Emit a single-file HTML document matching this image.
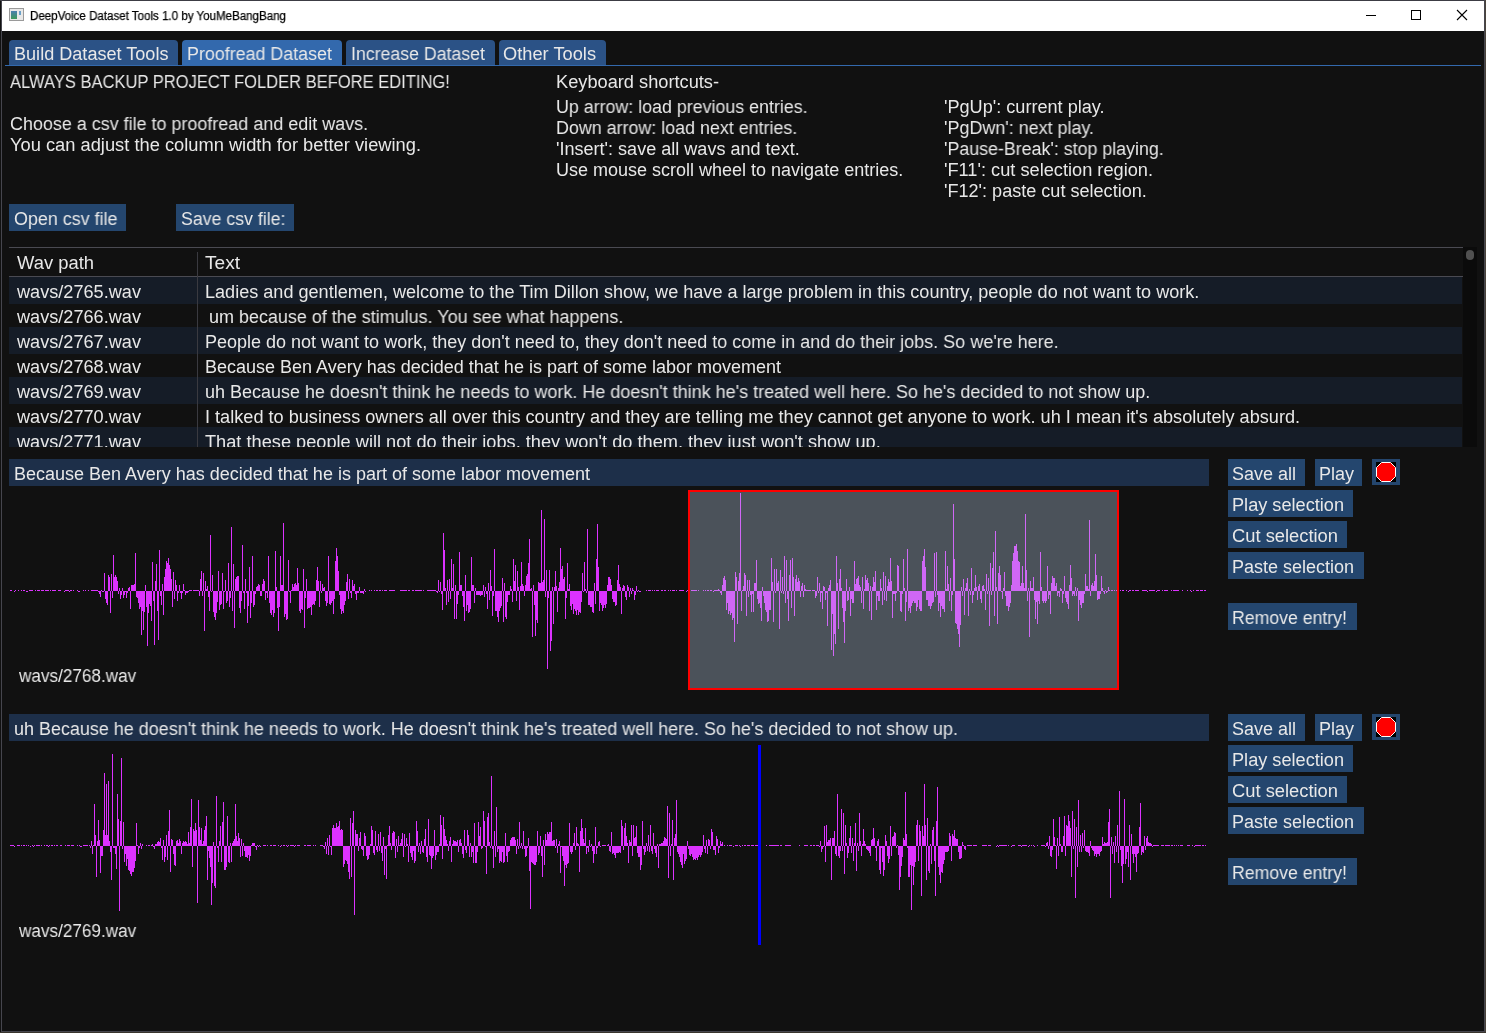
<!DOCTYPE html>
<html><head><meta charset="utf-8"><title>DeepVoice Dataset Tools</title>
<style>
html,body{margin:0;padding:0;width:1486px;height:1033px;overflow:hidden;background:#111111}
body>div,body div{position:absolute}
.t{position:absolute;white-space:pre;font-family:"Liberation Sans",sans-serif;transform-origin:0 0;display:inline-block;will-change:transform}
svg{position:absolute}
</style></head><body>
<div style="left:0px;top:0px;width:1486px;height:1px;background:#3c3c44;"></div>
<div style="left:1px;top:1px;width:1483px;height:30px;background:#ffffff;"></div>
<div style="left:1px;top:0px;width:1px;height:1031px;background:#46464e;"></div>
<div style="left:1484px;top:0px;width:1px;height:1031px;background:#46464e;"></div>
<div style="left:1485px;top:0px;width:1px;height:1033px;background:#4a443c;"></div>
<div style="left:1px;top:1031px;width:1484px;height:1px;background:#46464e;"></div>
<div style="left:0px;top:1032px;width:1486px;height:1px;background:#3a352e;"></div>
<div style="left:9px;top:8px;width:13px;height:11px;border:1px solid #9a9a9a;background:#e8e8e8"></div>
<div style="left:11px;top:11px;width:6px;height:8px;background:linear-gradient(#4a7fb0,#3c9a5a)"></div>
<div style="left:19px;top:11px;width:2px;height:4px;background:#6aa0c8"></div>
<span id="t0" class="t" style="left:30px;top:10px;font-size:12px;line-height:12px;color:#000000;transform:scaleX(0.9623);-webkit-text-stroke:0.25px #000">DeepVoice Dataset Tools 1.0 by YouMeBangBang</span>
<div style="left:1366px;top:15px;width:10px;height:1px;background:#000;"></div>
<div style="left:1411px;top:10px;width:8px;height:8px;border:1px solid #000"></div>
<svg style="position:absolute;left:1456px;top:9px" width="12" height="12" viewBox="0 0 12 12"><path d="M1 1L11 11M11 1L1 11" stroke="#000" stroke-width="1.1"/></svg>
<div style="left:9px;top:40px;width:169px;height:25px;background:#2b5286;border-radius:4px 4px 0 0"></div>
<span id="t1" class="t" style="left:14px;top:45px;font-size:18px;line-height:18px;color:#e8e8e8;transform:scaleX(1.0048);">Build Dataset Tools</span>
<div style="left:182px;top:40px;width:160px;height:25px;background:#3369ad;border-radius:4px 4px 0 0"></div>
<span id="t2" class="t" style="left:187px;top:45px;font-size:18px;line-height:18px;color:#e8e8e8;transform:scaleX(0.9925);">Proofread Dataset</span>
<div style="left:346px;top:40px;width:149px;height:25px;background:#2b5286;border-radius:4px 4px 0 0"></div>
<span id="t3" class="t" style="left:351px;top:45px;font-size:18px;line-height:18px;color:#e8e8e8;transform:scaleX(0.9846);">Increase Dataset</span>
<div style="left:499px;top:40px;width:107px;height:25px;background:#2b5286;border-radius:4px 4px 0 0"></div>
<span id="t4" class="t" style="left:503px;top:45px;font-size:18px;line-height:18px;color:#e8e8e8;transform:scaleX(1.0141);">Other Tools</span>
<div style="left:5px;top:65px;width:1476px;height:1px;background:#3369ad;"></div>
<span id="t5" class="t" style="left:10px;top:73px;font-size:18px;line-height:18px;color:#e8e8e8;transform:scaleX(0.9182);">ALWAYS BACKUP PROJECT FOLDER BEFORE EDITING!</span>
<span id="t6" class="t" style="left:10px;top:115px;font-size:18px;line-height:18px;color:#e8e8e8;transform:scaleX(0.9966);">Choose a csv file to proofread and edit wavs.</span>
<span id="t7" class="t" style="left:10px;top:136px;font-size:18px;line-height:18px;color:#e8e8e8;transform:scaleX(1.0159);">You can adjust the column width for better viewing.</span>
<span id="t8" class="t" style="left:556px;top:73px;font-size:18px;line-height:18px;color:#e8e8e8;transform:scaleX(1.0120);">Keyboard shortcuts-</span>
<span id="t9" class="t" style="left:556px;top:98px;font-size:18px;line-height:18px;color:#e8e8e8;transform:scaleX(0.9904);">Up arrow: load previous entries.</span>
<span id="t10" class="t" style="left:556px;top:119px;font-size:18px;line-height:18px;color:#e8e8e8;transform:scaleX(0.9929);">Down arrow: load next entries.</span>
<span id="t11" class="t" style="left:556px;top:140px;font-size:18px;line-height:18px;color:#e8e8e8;transform:scaleX(1.0030);">'Insert': save all wavs and text.</span>
<span id="t12" class="t" style="left:556px;top:161px;font-size:18px;line-height:18px;color:#e8e8e8;transform:scaleX(0.9995);">Use mouse scroll wheel to navigate entries.</span>
<span id="t13" class="t" style="left:944px;top:98px;font-size:18px;line-height:18px;color:#e8e8e8;transform:scaleX(1.0062);">'PgUp': current play.</span>
<span id="t14" class="t" style="left:944px;top:119px;font-size:18px;line-height:18px;color:#e8e8e8;transform:scaleX(0.9959);">'PgDwn': next play.</span>
<span id="t15" class="t" style="left:944px;top:140px;font-size:18px;line-height:18px;color:#e8e8e8;transform:scaleX(0.9896);">'Pause-Break': stop playing.</span>
<span id="t16" class="t" style="left:944px;top:161px;font-size:18px;line-height:18px;color:#e8e8e8;transform:scaleX(1.0114);">'F11': cut selection region.</span>
<span id="t17" class="t" style="left:944px;top:182px;font-size:18px;line-height:18px;color:#e8e8e8;transform:scaleX(1.0041);">'F12': paste cut selection.</span>
<div style="left:9px;top:204px;width:117px;height:27px;background:#24466e;"></div>
<span id="t18" class="t" style="left:13.5px;top:210px;font-size:18px;line-height:18px;color:#e8e8e8;transform:scaleX(0.9947);">Open csv file</span>
<div style="left:176px;top:204px;width:118px;height:27px;background:#24466e;"></div>
<span id="t19" class="t" style="left:180.5px;top:210px;font-size:18px;line-height:18px;color:#e8e8e8;transform:scaleX(0.9853);">Save csv file:</span>
<div style="left:9px;top:247px;width:1454px;height:1px;background:#4a4a52;"></div>
<div style="left:1463px;top:247px;width:14px;height:200px;background:#0b0b0b;"></div>
<div style="left:1466px;top:250px;width:8px;height:10px;background:#515151;border-radius:4px"></div>
<div style="left:9px;top:276px;width:1454px;height:1px;background:#4a4a52;"></div>
<div style="left:197px;top:252px;width:1px;height:195px;background:#3a3a40;"></div>
<span id="t20" class="t" style="left:17px;top:254px;font-size:18px;line-height:18px;color:#e8e8e8;transform:scaleX(1.0218);">Wav path</span>
<span id="t21" class="t" style="left:205px;top:254px;font-size:18px;line-height:18px;color:#e8e8e8;transform:scaleX(1.0620);">Text</span>
<div style="left:9px;top:277px;width:1453px;height:27px;background:#151c27;"></div>
<div style="left:9px;top:327px;width:1453px;height:27px;background:#151c27;"></div>
<div style="left:9px;top:377px;width:1453px;height:27px;background:#151c27;"></div>
<div style="left:9px;top:427px;width:1453px;height:20px;background:#151c27;"></div>
<div style="left:197px;top:277px;width:1px;height:170px;background:#3a3a40;"></div>
<div style="left:0;top:0;width:1462px;height:447px;overflow:hidden">
<span id="t22" class="t" style="left:17px;top:283px;font-size:18px;line-height:18px;color:#e8e8e8;transform:scaleX(1.0076);">wavs/2765.wav</span>
<span id="t23" class="t" style="left:205px;top:283px;font-size:18px;line-height:18px;color:#e8e8e8;transform:scaleX(1.0042);">Ladies and gentlemen, welcome to the Tim Dillon show, we have a large problem in this country, people do not want to work.</span>
<span id="t24" class="t" style="left:17px;top:308px;font-size:18px;line-height:18px;color:#e8e8e8;transform:scaleX(1.0076);">wavs/2766.wav</span>
<span id="t25" class="t" style="left:209px;top:308px;font-size:18px;line-height:18px;color:#e8e8e8;transform:scaleX(0.9979);">um because of the stimulus. You see what happens.</span>
<span id="t26" class="t" style="left:17px;top:333px;font-size:18px;line-height:18px;color:#e8e8e8;transform:scaleX(1.0076);">wavs/2767.wav</span>
<span id="t27" class="t" style="left:205px;top:333px;font-size:18px;line-height:18px;color:#e8e8e8;transform:scaleX(0.9998);">People do not want to work, they don't need to, they don't need to come in and do their jobs. So we're here.</span>
<span id="t28" class="t" style="left:17px;top:358px;font-size:18px;line-height:18px;color:#e8e8e8;transform:scaleX(1.0076);">wavs/2768.wav</span>
<span id="t29" class="t" style="left:205px;top:358px;font-size:18px;line-height:18px;color:#e8e8e8;transform:scaleX(1.0000);">Because Ben Avery has decided that he is part of some labor movement</span>
<span id="t30" class="t" style="left:17px;top:383px;font-size:18px;line-height:18px;color:#e8e8e8;transform:scaleX(1.0076);">wavs/2769.wav</span>
<span id="t31" class="t" style="left:205px;top:383px;font-size:18px;line-height:18px;color:#e8e8e8;transform:scaleX(0.9989);">uh Because he doesn't think he needs to work. He doesn't think he's treated well here. So he's decided to not show up.</span>
<span id="t32" class="t" style="left:17px;top:408px;font-size:18px;line-height:18px;color:#e8e8e8;transform:scaleX(1.0076);">wavs/2770.wav</span>
<span id="t33" class="t" style="left:205px;top:408px;font-size:18px;line-height:18px;color:#e8e8e8;transform:scaleX(1.0074);">I talked to business owners all over this country and they are telling me they cannot get anyone to work. uh I mean it's absolutely absurd.</span>
<span id="t34" class="t" style="left:17px;top:433px;font-size:18px;line-height:18px;color:#e8e8e8;transform:scaleX(1.0076);">wavs/2771.wav</span>
<span id="t35" class="t" style="left:205px;top:433px;font-size:18px;line-height:18px;color:#e8e8e8;transform:scaleX(1.0112);">That these people will not do their jobs, they won't do them, they just won't show up.</span>
</div>
<div style="left:9px;top:459px;width:1200px;height:27px;background:#1d2f49;"></div>
<span id="t36" class="t" style="left:14px;top:465px;font-size:18px;line-height:18px;color:#e8e8e8;transform:scaleX(1.0000);">Because Ben Avery has decided that he is part of some labor movement</span>
<div style="left:1228px;top:459px;width:77px;height:27px;background:#24466e;"></div>
<span id="t37" class="t" style="left:1232px;top:465px;font-size:18px;line-height:18px;color:#e8e8e8;transform:scaleX(0.9993);">Save all</span>
<div style="left:1315px;top:459px;width:47px;height:27px;background:#24466e;"></div>
<span id="t38" class="t" style="left:1319px;top:465px;font-size:18px;line-height:18px;color:#e8e8e8;transform:scaleX(0.9995);">Play</span>
<div style="left:1372px;top:459px;width:28px;height:26px;background:#24466e;"></div>
<svg style="position:absolute;left:1376px;top:462px" width="20" height="20" viewBox="0 0 20 20"><rect width="20" height="20" fill="#000"/><path d="M5.5 0.5H14.5L19.5 5.5V14.5L14.5 19.5H5.5L0.5 14.5V5.5Z" fill="#f00" stroke="#fff" stroke-width="1"/></svg>
<div style="left:1228px;top:490px;width:125px;height:27px;background:#24466e;"></div>
<span id="t39" class="t" style="left:1232px;top:496px;font-size:18px;line-height:18px;color:#e8e8e8;transform:scaleX(1.0085);">Play selection</span>
<div style="left:1228px;top:521px;width:119px;height:27px;background:#24466e;"></div>
<span id="t40" class="t" style="left:1232px;top:527px;font-size:18px;line-height:18px;color:#e8e8e8;transform:scaleX(1.0188);">Cut selection</span>
<div style="left:1228px;top:552px;width:136px;height:27px;background:#24466e;"></div>
<span id="t41" class="t" style="left:1232px;top:558px;font-size:18px;line-height:18px;color:#e8e8e8;transform:scaleX(0.9994);">Paste selection</span>
<div style="left:1228px;top:603px;width:129px;height:27px;background:#24466e;"></div>
<span id="t42" class="t" style="left:1232px;top:609px;font-size:18px;line-height:18px;color:#e8e8e8;transform:scaleX(0.9824);">Remove entry!</span>
<span id="t43" class="t" style="left:19px;top:667px;font-size:18px;line-height:18px;color:#e8e8e8;transform:scaleX(0.9527);">wavs/2768.wav</span>
<div style="left:9px;top:714px;width:1200px;height:27px;background:#1d2f49;"></div>
<span id="t44" class="t" style="left:14px;top:720px;font-size:18px;line-height:18px;color:#e8e8e8;transform:scaleX(0.9975);">uh Because he doesn't think he needs to work. He doesn't think he's treated well here. So he's decided to not show up.</span>
<div style="left:1228px;top:714px;width:77px;height:27px;background:#24466e;"></div>
<span id="t45" class="t" style="left:1232px;top:720px;font-size:18px;line-height:18px;color:#e8e8e8;transform:scaleX(0.9993);">Save all</span>
<div style="left:1315px;top:714px;width:47px;height:27px;background:#24466e;"></div>
<span id="t46" class="t" style="left:1319px;top:720px;font-size:18px;line-height:18px;color:#e8e8e8;transform:scaleX(0.9995);">Play</span>
<div style="left:1372px;top:714px;width:28px;height:26px;background:#24466e;"></div>
<svg style="position:absolute;left:1376px;top:717px" width="20" height="20" viewBox="0 0 20 20"><rect width="20" height="20" fill="#000"/><path d="M5.5 0.5H14.5L19.5 5.5V14.5L14.5 19.5H5.5L0.5 14.5V5.5Z" fill="#f00" stroke="#fff" stroke-width="1"/></svg>
<div style="left:1228px;top:745px;width:125px;height:27px;background:#24466e;"></div>
<span id="t47" class="t" style="left:1232px;top:751px;font-size:18px;line-height:18px;color:#e8e8e8;transform:scaleX(1.0085);">Play selection</span>
<div style="left:1228px;top:776px;width:119px;height:27px;background:#24466e;"></div>
<span id="t48" class="t" style="left:1232px;top:782px;font-size:18px;line-height:18px;color:#e8e8e8;transform:scaleX(1.0188);">Cut selection</span>
<div style="left:1228px;top:807px;width:136px;height:27px;background:#24466e;"></div>
<span id="t49" class="t" style="left:1232px;top:813px;font-size:18px;line-height:18px;color:#e8e8e8;transform:scaleX(0.9994);">Paste selection</span>
<div style="left:1228px;top:858px;width:129px;height:27px;background:#24466e;"></div>
<span id="t50" class="t" style="left:1232px;top:864px;font-size:18px;line-height:18px;color:#e8e8e8;transform:scaleX(0.9824);">Remove entry!</span>
<span id="t51" class="t" style="left:19px;top:922px;font-size:18px;line-height:18px;color:#e8e8e8;transform:scaleX(0.9527);">wavs/2769.wav</span>
<svg style="position:absolute;left:0;top:0" width="1486" height="1033" shape-rendering="crispEdges"><path d="M10.5 590V591M11.5 590V591M14.5 591V592M15.5 590V591M18.5 590V591M21.5 590V591M23.5 590V591M24.5 590V591M26.5 591V592M27.5 591V592M29.5 590V591M30.5 590V591M31.5 590V591M32.5 590V591M35.5 590V591M37.5 590V591M38.5 590V591M39.5 590V591M41.5 590V591M42.5 590V591M43.5 590V591M45.5 590V591M46.5 590V591M47.5 590V591M48.5 590V591M50.5 590V591M52.5 590V591M53.5 590V591M54.5 590V591M55.5 590V591M58.5 590V591M59.5 590V591M60.5 590V591M64.5 591V592M65.5 590V591M66.5 590V591M67.5 590V591M68.5 590V591M69.5 591V592M70.5 590V591M71.5 590V591M73.5 590V591M77.5 590V591M78.5 591V592M79.5 591V592M83.5 590V591M85.5 590V591M88.5 590V591M91.5 590V591M92.5 590V591M93.5 590V591M94.5 590V591M95.5 590V591M96.5 590V591M97.5 590V591M98.5 591V592M99.5 591V594M100.5 591V597M101.5 590V591M102.5 591V592M103.5 591V592M104.5 573V591M105.5 591V599M106.5 591V603M107.5 591V605M108.5 575V591M109.5 577V591M110.5 591V613M111.5 574V591M112.5 591V598M113.5 555V591M114.5 577V591M115.5 575V591M116.5 577V591M117.5 581V591M118.5 591V594M119.5 588V591M120.5 591V599M121.5 591V595M122.5 588V591M123.5 591V598M124.5 591V595M125.5 591V592M126.5 591V598M127.5 591V593M128.5 588V591M129.5 587V591M130.5 591V609M131.5 585V591M132.5 585V591M133.5 585V591M134.5 584V591M135.5 553V591M136.5 591V597M137.5 591V598M138.5 591V603M139.5 591V609M140.5 591V607M141.5 591V635M142.5 591V611M143.5 591V630M144.5 591V612M145.5 585V591M146.5 591V607M147.5 591V646M148.5 591V613M149.5 591V604M150.5 591V606M151.5 591V621M152.5 562V591M153.5 591V601M154.5 591V645M155.5 581V591M156.5 564V591M157.5 591V611M158.5 591V640M159.5 550V591M160.5 591V596M161.5 591V605M162.5 584V591M163.5 591V615M164.5 577V591M165.5 569V591M166.5 561V591M167.5 563V591M168.5 558V591M169.5 565V591M170.5 569V591M171.5 579V591M172.5 591V607M173.5 572V591M174.5 591V599M175.5 580V591M176.5 585V591M177.5 591V601M178.5 591V593M179.5 585V591M180.5 591V593M181.5 591V599M182.5 591V593M183.5 584V591M184.5 590V591M185.5 591V595M186.5 591V593M187.5 591V593M188.5 591V592M189.5 590V591M190.5 590V591M191.5 590V591M193.5 590V591M194.5 590V591M195.5 590V591M196.5 590V591M197.5 590V591M198.5 590V591M199.5 591V596M200.5 579V591M201.5 571V591M202.5 591V596M203.5 573V591M204.5 591V631M205.5 581V591M206.5 589V591M207.5 586V591M208.5 591V597M209.5 591V611M210.5 535V591M211.5 591V592M212.5 575V591M213.5 591V612M214.5 591V617M215.5 591V620M216.5 591V613M217.5 591V602M218.5 571V591M219.5 591V610M220.5 591V605M221.5 591V604M222.5 573V591M223.5 591V609M224.5 591V592M225.5 580V591M226.5 591V603M227.5 591V601M228.5 563V591M229.5 591V607M230.5 591V598M231.5 527V591M232.5 591V611M233.5 564V591M234.5 591V628M235.5 579V591M236.5 577V591M237.5 576V591M238.5 576V591M239.5 591V608M240.5 591V613M241.5 591V601M242.5 545V591M243.5 591V593M244.5 591V609M245.5 579V591M246.5 591V593M247.5 591V623M248.5 591V606M249.5 567V591M250.5 591V618M251.5 591V603M252.5 556V591M253.5 591V607M254.5 591V605M255.5 591V594M256.5 587V591M257.5 586V591M258.5 584V591M259.5 585V591M260.5 591V596M261.5 591V596M262.5 584V591M263.5 579V591M264.5 581V591M265.5 591V600M266.5 591V593M267.5 591V598M268.5 556V591M269.5 591V603M270.5 591V613M271.5 591V615M272.5 591V610M273.5 591V617M274.5 591V613M275.5 551V591M276.5 587V591M277.5 591V608M278.5 591V631M279.5 591V607M280.5 556V591M281.5 585V591M282.5 585V591M283.5 523V591M284.5 591V617M285.5 591V614M286.5 591V620M287.5 591V619M288.5 560V591M289.5 591V592M290.5 591V603M291.5 590V591M292.5 584V591M293.5 587V591M294.5 584V591M295.5 583V591M296.5 585V591M297.5 568V591M298.5 583V591M299.5 591V611M300.5 591V613M301.5 591V609M302.5 591V610M303.5 569V591M304.5 591V628M305.5 591V598M306.5 579V591M307.5 591V609M308.5 591V608M309.5 591V608M310.5 591V607M311.5 591V615M312.5 591V605M313.5 591V604M314.5 591V605M315.5 591V601M316.5 580V591M317.5 567V591M318.5 581V591M319.5 591V607M320.5 581V591M321.5 591V593M322.5 584V591M323.5 588V591M324.5 587V591M325.5 591V601M326.5 591V606M327.5 591V603M328.5 556V591M329.5 591V604M330.5 591V605M331.5 591V603M332.5 591V601M333.5 591V614M334.5 591V599M335.5 561V591M336.5 548V591M337.5 556V591M338.5 571V591M339.5 591V595M340.5 591V609M341.5 591V614M342.5 591V611M343.5 591V613M344.5 591V605M345.5 591V601M346.5 582V591M347.5 574V591M348.5 591V599M349.5 579V591M350.5 591V593M351.5 591V598M352.5 580V591M353.5 586V591M354.5 584V591M355.5 591V594M356.5 591V600M357.5 591V593M358.5 591V593M359.5 587V591M360.5 591V593M361.5 591V593M362.5 591V593M363.5 591V594M364.5 589V591M365.5 591V592M369.5 590V591M371.5 590V591M374.5 590V591M376.5 590V591M377.5 590V591M379.5 590V591M380.5 590V591M382.5 590V591M384.5 590V591M385.5 590V591M386.5 590V591M389.5 590V591M390.5 590V591M391.5 590V591M392.5 590V591M393.5 590V591M394.5 590V591M400.5 590V591M401.5 590V591M402.5 590V591M403.5 590V591M404.5 590V591M405.5 590V591M406.5 590V591M408.5 590V591M409.5 590V591M412.5 590V591M413.5 590V591M415.5 590V591M416.5 590V591M417.5 590V591M418.5 590V591M419.5 590V591M420.5 590V591M421.5 590V591M423.5 590V591M427.5 590V591M428.5 590V591M429.5 590V591M430.5 590V591M431.5 590V591M432.5 590V591M433.5 590V591M434.5 590V591M435.5 590V591M436.5 591V592M437.5 591V593M438.5 580V591M439.5 591V592M440.5 582V591M441.5 591V594M442.5 591V610M443.5 533V591M444.5 550V591M445.5 588V591M446.5 591V605M447.5 580V591M448.5 591V602M449.5 579V591M450.5 591V599M451.5 559V591M452.5 588V591M453.5 564V591M454.5 591V619M455.5 585V591M456.5 591V619M457.5 591V604M458.5 591V595M459.5 552V591M460.5 585V591M461.5 585V591M462.5 591V596M463.5 591V607M464.5 591V621M465.5 575V591M466.5 591V611M467.5 591V605M468.5 591V613M469.5 591V612M470.5 591V609M471.5 557V591M472.5 585V591M473.5 585V591M474.5 591V603M475.5 588V591M476.5 591V595M477.5 591V595M478.5 591V595M479.5 591V595M480.5 591V596M481.5 591V595M482.5 591V595M483.5 585V591M484.5 591V597M485.5 587V591M486.5 591V594M487.5 591V609M488.5 583V591M489.5 591V600M490.5 570V591M491.5 586V591M492.5 591V616M493.5 591V596M494.5 549V591M495.5 591V611M496.5 591V611M497.5 591V617M498.5 591V622M499.5 591V611M500.5 591V608M501.5 591V606M502.5 578V591M503.5 591V622M504.5 583V591M505.5 591V617M506.5 591V619M507.5 591V602M508.5 591V595M509.5 591V595M510.5 586V591M511.5 589V591M512.5 591V602M513.5 559V591M514.5 581V591M515.5 565V591M516.5 591V601M517.5 571V591M518.5 587V591M519.5 591V610M520.5 586V591M521.5 562V591M522.5 584V591M523.5 586V591M524.5 591V596M525.5 585V591M526.5 576V591M527.5 574V591M528.5 563V591M529.5 539V591M530.5 589V591M531.5 588V591M532.5 591V637M533.5 585V591M534.5 591V605M535.5 591V636M536.5 591V620M537.5 591V623M538.5 582V591M539.5 583V591M540.5 583V591M541.5 510V591M542.5 582V591M543.5 580V591M544.5 519V591M545.5 591V597M546.5 570V591M547.5 591V669M548.5 591V598M549.5 570V591M550.5 591V651M551.5 591V641M552.5 587V591M553.5 591V624M554.5 587V591M555.5 571V591M556.5 586V591M557.5 591V612M558.5 588V591M559.5 582V591M560.5 548V591M561.5 569V591M562.5 566V591M563.5 579V591M564.5 577V591M565.5 591V619M566.5 591V598M567.5 563V591M568.5 589V591M569.5 584V591M570.5 591V606M571.5 591V610M572.5 591V604M573.5 591V614M574.5 591V609M575.5 591V611M576.5 591V615M577.5 591V610M578.5 591V615M579.5 591V612M580.5 591V613M581.5 591V602M582.5 573V591M583.5 591V592M584.5 562V591M585.5 589V591M586.5 591V593M587.5 529V591M588.5 591V605M589.5 591V605M590.5 591V607M591.5 591V607M592.5 591V612M593.5 591V613M594.5 583V591M595.5 591V604M596.5 559V591M597.5 524V591M598.5 567V591M599.5 591V611M600.5 591V603M601.5 591V605M602.5 591V611M603.5 591V608M604.5 591V605M605.5 591V608M606.5 591V604M607.5 585V591M608.5 577V591M609.5 577V591M610.5 579V591M611.5 585V591M612.5 591V599M613.5 591V602M614.5 591V602M615.5 591V606M616.5 591V605M617.5 580V591M618.5 565V591M619.5 584V591M620.5 587V591M621.5 591V614M622.5 588V591M623.5 585V591M624.5 586V591M625.5 591V597M626.5 591V600M627.5 585V591M628.5 587V591M629.5 591V597M630.5 588V591M631.5 591V594M632.5 588V591M633.5 590V591M634.5 591V600M635.5 591V595M636.5 586V591M637.5 591V592M638.5 590V591M639.5 591V592M640.5 591V592M646.5 590V591M648.5 590V591M649.5 590V591M650.5 590V591M652.5 590V591M654.5 590V591M656.5 590V591M657.5 590V591M658.5 590V591M661.5 590V591M662.5 590V591M664.5 590V591M665.5 590V591M668.5 590V591M670.5 590V591M672.5 590V591M673.5 590V591M674.5 590V591M676.5 590V591M679.5 590V591M680.5 590V591M681.5 590V591M682.5 590V591M683.5 590V591M686.5 591V592M687.5 590V591M688.5 590V591M689.5 590V591M691.5 590V591M692.5 590V591M693.5 590V591M694.5 590V591M695.5 590V591M696.5 590V591M698.5 590V591M703.5 590V591M705.5 590V591M707.5 590V591M708.5 590V591M710.5 590V591M711.5 590V591M713.5 591V592M714.5 590V591M715.5 590V591M716.5 590V591M717.5 590V591M718.5 589V591M719.5 590V591M720.5 591V593M721.5 591V595M722.5 585V591M723.5 578V591M724.5 576V591M725.5 580V591M726.5 591V610M727.5 591V603M728.5 591V614M729.5 591V611M730.5 591V615M731.5 591V613M732.5 591V620M733.5 591V618M734.5 591V642M735.5 572V591M736.5 577V591M737.5 591V624M738.5 581V591M739.5 573V591M740.5 493V591M741.5 591V611M742.5 590V591M743.5 586V591M744.5 573V591M745.5 575V591M746.5 591V616M747.5 580V591M748.5 591V597M749.5 580V591M750.5 591V595M751.5 591V612M752.5 591V594M753.5 591V612M754.5 583V591M755.5 583V591M756.5 560V591M757.5 591V599M758.5 591V604M759.5 591V603M760.5 591V608M761.5 591V621M762.5 587V591M763.5 591V596M764.5 591V603M765.5 591V610M766.5 591V612M767.5 591V622M768.5 591V621M769.5 591V610M770.5 591V610M771.5 558V591M772.5 582V591M773.5 591V622M774.5 569V591M775.5 591V593M776.5 569V591M777.5 583V591M778.5 581V591M779.5 591V629M780.5 570V591M781.5 591V593M782.5 577V591M783.5 591V594M784.5 556V591M785.5 591V603M786.5 560V591M787.5 591V599M788.5 591V621M789.5 575V591M790.5 560V591M791.5 591V608M792.5 558V591M793.5 577V591M794.5 591V616M795.5 579V591M796.5 575V591M797.5 582V591M798.5 578V591M799.5 581V591M800.5 591V597M801.5 586V591M802.5 583V591M803.5 591V597M804.5 585V591M805.5 589V591M806.5 590V591M807.5 590V591M808.5 590V591M809.5 590V591M810.5 590V591M812.5 590V591M813.5 590V591M814.5 590V591M815.5 591V598M816.5 591V596M817.5 577V591M818.5 591V593M819.5 583V591M820.5 591V602M821.5 591V593M822.5 591V609M823.5 586V591M824.5 587V591M825.5 591V600M826.5 591V593M827.5 591V626M828.5 588V591M829.5 585V591M830.5 580V591M831.5 591V650M832.5 591V614M833.5 591V656M834.5 591V634M835.5 591V644M836.5 556V591M837.5 583V591M838.5 591V629M839.5 579V591M840.5 569V591M841.5 588V591M842.5 591V608M843.5 591V622M844.5 591V643M845.5 591V611M846.5 579V591M847.5 591V601M848.5 591V600M849.5 587V591M850.5 591V616M851.5 591V599M852.5 591V603M853.5 591V603M854.5 561V591M855.5 584V591M856.5 579V591M857.5 578V591M858.5 576V591M859.5 585V591M860.5 587V591M861.5 591V603M862.5 577V591M863.5 591V609M864.5 589V591M865.5 575V591M866.5 580V591M867.5 578V591M868.5 583V591M869.5 591V611M870.5 586V591M871.5 591V620M872.5 587V591M873.5 577V591M874.5 582V591M875.5 571V591M876.5 591V610M877.5 591V596M878.5 591V601M879.5 591V601M880.5 579V591M881.5 588V591M882.5 591V605M883.5 572V591M884.5 591V600M885.5 576V591M886.5 591V601M887.5 586V591M888.5 579V591M889.5 582V591M890.5 558V591M891.5 581V591M892.5 591V618M893.5 591V594M894.5 591V594M895.5 591V601M896.5 591V593M897.5 565V591M898.5 566V591M899.5 591V592M900.5 591V611M901.5 591V612M902.5 591V594M903.5 559V591M904.5 588V591M905.5 591V621M906.5 591V602M907.5 549V591M908.5 591V611M909.5 591V608M910.5 591V613M911.5 591V606M912.5 591V603M913.5 591V601M914.5 591V603M915.5 591V603M916.5 591V611M917.5 591V607M918.5 591V600M919.5 591V609M920.5 591V611M921.5 591V611M922.5 561V591M923.5 556V591M924.5 549V591M925.5 567V591M926.5 591V600M927.5 591V600M928.5 591V606M929.5 591V606M930.5 591V609M931.5 591V606M932.5 591V603M933.5 591V602M934.5 553V591M935.5 591V597M936.5 552V591M937.5 591V595M938.5 591V611M939.5 591V603M940.5 591V617M941.5 591V606M942.5 591V609M943.5 591V609M944.5 591V612M945.5 551V591M946.5 589V591M947.5 566V591M948.5 584V591M949.5 591V601M950.5 578V591M951.5 591V611M952.5 591V595M953.5 504V591M954.5 559V591M955.5 591V623M956.5 591V624M957.5 591V629M958.5 591V634M959.5 591V647M960.5 591V625M961.5 587V591M962.5 591V596M963.5 579V591M964.5 591V615M965.5 588V591M966.5 583V591M967.5 578V591M968.5 591V616M969.5 589V591M970.5 591V595M971.5 568V591M972.5 591V603M973.5 591V595M974.5 588V591M975.5 575V591M976.5 587V591M977.5 591V600M978.5 586V591M979.5 584V591M980.5 591V599M981.5 591V603M982.5 586V591M983.5 585V591M984.5 589V591M985.5 591V610M986.5 574V591M987.5 591V594M988.5 578V591M989.5 591V626M990.5 563V591M991.5 591V595M992.5 568V591M993.5 552V591M994.5 591V616M995.5 531V591M996.5 587V591M997.5 591V624M998.5 573V591M999.5 566V591M1000.5 575V591M1001.5 591V592M1002.5 591V599M1003.5 588V591M1004.5 572V591M1005.5 591V596M1006.5 591V606M1007.5 591V606M1008.5 591V611M1009.5 591V607M1010.5 591V603M1011.5 585V591M1012.5 561V591M1013.5 553V591M1014.5 546V591M1015.5 546V591M1016.5 544V591M1017.5 551V591M1018.5 561V591M1019.5 562V591M1020.5 586V591M1021.5 583V591M1022.5 566V591M1023.5 583V591M1024.5 588V591M1025.5 514V591M1026.5 570V591M1027.5 591V601M1028.5 588V591M1029.5 591V637M1030.5 581V591M1031.5 588V591M1032.5 588V591M1033.5 577V591M1034.5 591V600M1035.5 591V619M1036.5 591V602M1037.5 591V624M1038.5 591V601M1039.5 591V604M1040.5 552V591M1041.5 587V591M1042.5 591V601M1043.5 591V603M1044.5 591V601M1045.5 591V603M1046.5 591V601M1047.5 566V591M1048.5 591V599M1049.5 591V595M1050.5 591V614M1051.5 583V591M1052.5 576V591M1053.5 578V591M1054.5 578V591M1055.5 586V591M1056.5 583V591M1057.5 591V596M1058.5 591V593M1059.5 591V597M1060.5 588V591M1061.5 589V591M1062.5 591V603M1063.5 591V594M1064.5 576V591M1065.5 591V598M1066.5 591V602M1067.5 591V604M1068.5 591V609M1069.5 585V591M1070.5 565V591M1071.5 578V591M1072.5 591V596M1073.5 591V594M1074.5 591V596M1075.5 587V591M1076.5 591V596M1077.5 588V591M1078.5 591V621M1079.5 591V600M1080.5 591V605M1081.5 591V608M1082.5 591V603M1083.5 591V603M1084.5 591V594M1085.5 574V591M1086.5 586V591M1087.5 586V591M1088.5 589V591M1089.5 520V591M1090.5 591V596M1091.5 585V591M1092.5 583V591M1093.5 586V591M1094.5 581V591M1095.5 554V591M1096.5 575V591M1097.5 591V600M1098.5 591V599M1099.5 591V599M1100.5 591V594M1101.5 576V591M1102.5 588V591M1103.5 591V592M1104.5 591V594M1105.5 590V591M1106.5 591V593M1107.5 591V592M1108.5 587V591M1109.5 590V591M1111.5 590V591M1112.5 590V591M1114.5 590V591M1116.5 590V591M1118.5 590V591M1120.5 590V591M1122.5 590V591M1123.5 590V591M1126.5 590V591M1128.5 591V592M1129.5 590V591M1130.5 590V591M1132.5 590V591M1133.5 590V591M1135.5 590V591M1136.5 590V591M1137.5 590V591M1138.5 590V591M1142.5 590V591M1143.5 590V591M1144.5 590V591M1145.5 590V591M1146.5 590V591M1147.5 591V592M1149.5 590V591M1150.5 590V591M1151.5 590V591M1152.5 590V591M1153.5 590V591M1154.5 590V591M1156.5 591V592M1157.5 590V591M1158.5 590V591M1159.5 590V591M1162.5 590V591M1164.5 590V591M1165.5 590V591M1166.5 590V591M1167.5 590V591M1171.5 590V591M1173.5 590V591M1174.5 590V591M1175.5 590V591M1176.5 590V591M1177.5 590V591M1178.5 590V591M1182.5 590V591M1187.5 590V591M1190.5 590V591M1191.5 591V592M1193.5 590V591M1196.5 590V591M1197.5 590V591M1198.5 590V591M1200.5 590V591M1201.5 590V591M1202.5 590V591M1204.5 590V591M1205.5 590V591" stroke="#dc32ff" stroke-width="1" fill="none"/><path d="M10.5 845V846M11.5 845V846M12.5 845V846M13.5 845V846M14.5 846V847M17.5 845V846M18.5 845V846M19.5 845V846M21.5 845V846M23.5 845V846M24.5 845V846M26.5 845V846M28.5 845V846M30.5 846V847M32.5 845V846M33.5 846V847M34.5 845V846M36.5 845V846M37.5 845V846M38.5 845V846M39.5 845V846M41.5 845V846M44.5 845V846M46.5 845V846M47.5 845V846M48.5 846V847M49.5 845V846M51.5 845V846M52.5 845V846M54.5 845V846M56.5 845V846M57.5 845V846M60.5 845V846M61.5 845V846M65.5 845V846M67.5 845V846M68.5 845V846M69.5 845V846M71.5 845V846M72.5 845V846M73.5 845V846M77.5 845V846M79.5 845V846M80.5 846V847M81.5 846V847M83.5 845V846M84.5 845V846M85.5 845V846M86.5 845V846M87.5 845V846M89.5 845V846M90.5 846V848M91.5 841V846M92.5 846V854M93.5 845V846M94.5 804V846M95.5 835V846M96.5 846V877M97.5 841V846M98.5 820V846M99.5 840V846M100.5 846V873M101.5 846V856M102.5 846V856M103.5 830V846M104.5 773V846M105.5 835V846M106.5 784V846M107.5 835V846M108.5 781V846M109.5 841V846M110.5 846V852M111.5 846V880M112.5 754V846M113.5 846V848M114.5 846V848M115.5 846V854M116.5 846V869M117.5 794V846M118.5 819V846M119.5 846V911M120.5 821V846M121.5 758V846M122.5 846V849M123.5 822V846M124.5 846V862M125.5 846V854M126.5 846V866M127.5 846V859M128.5 846V870M129.5 846V871M130.5 846V874M131.5 846V876M132.5 846V872M133.5 846V872M134.5 846V868M135.5 846V861M136.5 823V846M137.5 845V846M138.5 846V854M139.5 846V848M140.5 843V846M141.5 846V849M142.5 844V846M146.5 845V846M148.5 845V846M149.5 845V846M151.5 845V846M152.5 844V846M153.5 846V847M154.5 846V849M155.5 844V846M156.5 844V846M157.5 842V846M158.5 841V846M159.5 842V846M160.5 838V846M161.5 846V848M162.5 846V860M163.5 840V846M164.5 846V862M165.5 846V857M166.5 835V846M167.5 846V860M168.5 831V846M169.5 810V846M170.5 846V872M171.5 839V846M172.5 840V846M173.5 846V854M174.5 846V865M175.5 846V866M176.5 841V846M177.5 840V846M178.5 843V846M179.5 839V846M180.5 841V846M181.5 846V854M182.5 843V846M183.5 841V846M184.5 842V846M185.5 841V846M186.5 842V846M187.5 844V846M188.5 832V846M189.5 843V846M190.5 827V846M191.5 799V846M192.5 846V867M193.5 829V846M194.5 831V846M195.5 823V846M196.5 830V846M197.5 846V903M198.5 800V846M199.5 827V846M200.5 840V846M201.5 828V846M202.5 844V846M203.5 841V846M204.5 830V846M205.5 826V846M206.5 816V846M207.5 846V880M208.5 846V851M209.5 846V858M210.5 846V867M211.5 846V905M212.5 846V883M213.5 842V846M214.5 846V886M215.5 846V888M216.5 796V846M217.5 846V848M218.5 846V862M219.5 841V846M220.5 826V846M221.5 846V862M222.5 822V846M223.5 802V846M224.5 846V870M225.5 846V870M226.5 846V867M227.5 816V846M228.5 846V862M229.5 846V863M230.5 843V846M231.5 846V862M232.5 843V846M233.5 841V846M234.5 839V846M235.5 804V846M236.5 836V846M237.5 841V846M238.5 833V846M239.5 838V846M240.5 846V857M241.5 839V846M242.5 846V856M243.5 843V846M244.5 846V851M245.5 846V857M246.5 846V857M247.5 846V858M248.5 846V855M249.5 846V861M250.5 846V856M251.5 845V846M252.5 843V846M253.5 843V846M254.5 843V846M255.5 846V847M256.5 846V850M257.5 845V846M258.5 846V847M259.5 845V846M260.5 846V847M263.5 845V846M264.5 845V846M265.5 845V846M267.5 845V846M270.5 845V846M271.5 845V846M273.5 845V846M274.5 845V846M275.5 845V846M278.5 845V846M280.5 846V847M281.5 845V846M283.5 845V846M284.5 845V846M286.5 845V846M287.5 846V847M288.5 845V846M290.5 845V846M291.5 845V846M292.5 845V846M293.5 845V846M294.5 846V847M295.5 845V846M297.5 845V846M298.5 845V846M299.5 845V846M304.5 845V846M305.5 845V846M307.5 845V846M308.5 845V846M309.5 845V846M310.5 845V846M313.5 845V846M315.5 845V846M320.5 845V846M321.5 845V846M322.5 845V846M323.5 846V847M324.5 846V849M325.5 842V846M326.5 846V854M327.5 838V846M328.5 846V855M329.5 835V846M330.5 846V847M331.5 846V855M332.5 828V846M333.5 825V846M334.5 828V846M335.5 828V846M336.5 823V846M337.5 827V846M338.5 826V846M339.5 821V846M340.5 830V846M341.5 829V846M342.5 830V846M343.5 846V867M344.5 846V864M345.5 846V860M346.5 846V861M347.5 846V864M348.5 846V872M349.5 846V879M350.5 818V846M351.5 846V877M352.5 823V846M353.5 811V846M354.5 846V915M355.5 830V846M356.5 834V846M357.5 834V846M358.5 846V851M359.5 838V846M360.5 832V846M361.5 846V849M362.5 846V850M363.5 846V856M364.5 833V846M365.5 836V846M366.5 846V856M367.5 846V860M368.5 846V859M369.5 846V855M370.5 844V846M371.5 826V846M372.5 830V846M373.5 846V853M374.5 846V855M375.5 831V846M376.5 846V850M377.5 846V852M378.5 834V846M379.5 846V851M380.5 832V846M381.5 846V853M382.5 846V861M383.5 837V846M384.5 846V875M385.5 846V849M386.5 846V879M387.5 845V846M388.5 835V846M389.5 826V846M390.5 843V846M391.5 846V850M392.5 833V846M393.5 831V846M394.5 832V846M395.5 846V858M396.5 839V846M397.5 846V852M398.5 836V846M399.5 845V846M400.5 843V846M401.5 839V846M402.5 833V846M403.5 846V857M404.5 834V846M405.5 846V847M406.5 838V846M407.5 844V846M408.5 846V862M409.5 833V846M410.5 846V853M411.5 846V857M412.5 846V860M413.5 846V851M414.5 846V863M415.5 846V861M416.5 821V846M417.5 831V846M418.5 846V852M419.5 843V846M420.5 846V854M421.5 841V846M422.5 846V852M423.5 846V853M424.5 839V846M425.5 829V846M426.5 846V857M427.5 846V862M428.5 819V846M429.5 846V855M430.5 846V856M431.5 846V869M432.5 846V858M433.5 846V856M434.5 830V846M435.5 846V860M436.5 846V855M437.5 846V852M438.5 846V852M439.5 844V846M440.5 815V846M441.5 825V846M442.5 846V859M443.5 817V846M444.5 829V846M445.5 836V846M446.5 840V846M447.5 844V846M448.5 846V851M449.5 841V846M450.5 837V846M451.5 846V862M452.5 844V846M453.5 840V846M454.5 841V846M455.5 841V846M456.5 842V846M457.5 840V846M458.5 846V852M459.5 840V846M460.5 839V846M461.5 843V846M462.5 846V854M463.5 846V858M464.5 830V846M465.5 846V850M466.5 846V853M467.5 830V846M468.5 835V846M469.5 846V857M470.5 843V846M471.5 846V857M472.5 846V852M473.5 846V863M474.5 823V846M475.5 846V863M476.5 846V863M477.5 846V852M478.5 822V846M479.5 836V846M480.5 827V846M481.5 846V849M482.5 846V848M483.5 811V846M484.5 821V846M485.5 846V847M486.5 846V874M487.5 817V846M488.5 813V846M489.5 842V846M490.5 846V848M491.5 776V846M492.5 846V849M493.5 846V868M494.5 831V846M495.5 846V857M496.5 807V846M497.5 846V852M498.5 846V849M499.5 846V863M500.5 846V861M501.5 846V862M502.5 846V852M503.5 846V863M504.5 846V862M505.5 833V846M506.5 846V856M507.5 846V862M508.5 846V852M509.5 846V851M510.5 840V846M511.5 838V846M512.5 837V846M513.5 837V846M514.5 837V846M515.5 840V846M516.5 846V854M517.5 839V846M518.5 846V849M519.5 822V846M520.5 846V848M521.5 843V846M522.5 846V849M523.5 831V846M524.5 846V849M525.5 846V857M526.5 846V856M527.5 846V848M528.5 838V846M529.5 846V871M530.5 846V909M531.5 846V862M532.5 846V863M533.5 846V864M534.5 846V865M535.5 846V865M536.5 846V862M537.5 831V846M538.5 846V855M539.5 846V853M540.5 836V846M541.5 846V856M542.5 846V877M543.5 840V846M544.5 846V865M545.5 834V846M546.5 840V846M547.5 832V846M548.5 834V846M549.5 832V846M550.5 832V846M551.5 822V846M552.5 841V846M553.5 840V846M554.5 840V846M555.5 846V848M556.5 839V846M557.5 846V853M558.5 844V846M559.5 841V846M560.5 846V873M561.5 846V847M562.5 846V856M563.5 846V861M564.5 846V886M565.5 846V865M566.5 846V868M567.5 846V864M568.5 846V863M569.5 823V846M570.5 846V852M571.5 846V854M572.5 846V852M573.5 843V846M574.5 833V846M575.5 846V850M576.5 827V846M577.5 843V846M578.5 844V846M579.5 846V872M580.5 831V846M581.5 819V846M582.5 828V846M583.5 839V846M584.5 843V846M585.5 828V846M586.5 846V854M587.5 846V848M588.5 846V852M589.5 840V846M590.5 846V847M591.5 844V846M592.5 846V851M593.5 846V863M594.5 846V854M595.5 827V846M596.5 846V854M597.5 846V848M598.5 842V846M599.5 841V846M600.5 846V847M602.5 845V846M603.5 845V846M604.5 845V846M605.5 845V846M607.5 845V846M608.5 844V846M609.5 846V851M610.5 846V852M611.5 832V846M612.5 846V854M613.5 846V853M614.5 846V855M615.5 846V858M616.5 846V853M617.5 846V853M618.5 846V853M619.5 846V852M620.5 846V853M621.5 820V846M622.5 826V846M623.5 846V850M624.5 828V846M625.5 823V846M626.5 836V846M627.5 843V846M628.5 846V863M629.5 840V846M630.5 842V846M631.5 825V846M632.5 846V856M633.5 825V846M634.5 838V846M635.5 837V846M636.5 826V846M637.5 846V853M638.5 846V857M639.5 846V857M640.5 846V870M641.5 846V865M642.5 821V846M643.5 846V849M644.5 846V855M645.5 846V852M646.5 843V846M647.5 846V851M648.5 835V846M649.5 846V852M650.5 825V846M651.5 846V851M652.5 846V854M653.5 833V846M654.5 846V849M655.5 846V853M656.5 846V857M657.5 844V846M658.5 846V868M659.5 844V846M660.5 844V846M661.5 843V846M662.5 843V846M663.5 841V846M664.5 837V846M665.5 838V846M666.5 839V846M667.5 806V846M668.5 846V878M669.5 813V846M670.5 846V856M671.5 844V846M672.5 820V846M673.5 846V880M674.5 838V846M675.5 834V846M676.5 800V846M677.5 846V852M678.5 846V854M679.5 846V857M680.5 846V862M681.5 846V865M682.5 846V868M683.5 846V854M684.5 846V864M685.5 846V861M686.5 846V859M687.5 841V846M688.5 846V849M689.5 846V855M690.5 846V856M691.5 846V854M692.5 846V857M693.5 846V860M694.5 846V859M695.5 846V860M696.5 846V858M697.5 846V860M698.5 846V857M699.5 846V855M700.5 846V857M701.5 846V855M702.5 846V852M703.5 835V846M704.5 846V849M705.5 846V853M706.5 840V846M707.5 846V854M708.5 839V846M709.5 840V846M710.5 846V849M711.5 829V846M712.5 832V846M713.5 846V850M714.5 846V850M715.5 846V855M716.5 836V846M717.5 839V846M718.5 846V853M719.5 846V848M720.5 841V846M721.5 844V846M722.5 842V846M724.5 845V846M727.5 845V846M729.5 845V846M730.5 845V846M731.5 845V846M733.5 846V847M735.5 845V846M736.5 845V846M737.5 845V846M739.5 845V846M740.5 846V847M742.5 845V846M744.5 845V846M745.5 845V846M747.5 845V846M748.5 845V846M749.5 845V846M751.5 845V846M752.5 845V846M753.5 845V846M755.5 845V846M756.5 845V846M757.5 845V846M766.5 845V846M769.5 845V846M770.5 845V846M771.5 845V846M772.5 845V846M773.5 845V846M774.5 845V846M775.5 845V846M776.5 845V846M777.5 845V846M778.5 845V846M780.5 845V846M781.5 845V846M785.5 845V846M786.5 845V846M787.5 845V846M788.5 845V846M789.5 845V846M790.5 845V846M799.5 845V846M804.5 845V846M805.5 845V846M806.5 845V846M807.5 845V846M810.5 845V846M811.5 845V846M813.5 845V846M814.5 845V846M816.5 845V846M817.5 845V846M818.5 845V846M819.5 846V847M820.5 841V846M821.5 846V852M822.5 846V849M823.5 846V847M824.5 826V846M825.5 846V862M826.5 825V846M827.5 842V846M828.5 840V846M829.5 840V846M830.5 838V846M831.5 846V880M832.5 838V846M833.5 838V846M834.5 831V846M835.5 846V854M836.5 846V856M837.5 794V846M838.5 846V856M839.5 846V858M840.5 846V851M841.5 809V846M842.5 846V851M843.5 813V846M844.5 846V874M845.5 825V846M846.5 843V846M847.5 846V858M848.5 846V853M849.5 838V846M850.5 826V846M851.5 846V853M852.5 838V846M853.5 846V861M854.5 843V846M855.5 823V846M856.5 846V871M857.5 843V846M858.5 846V851M859.5 813V846M860.5 841V846M861.5 846V856M862.5 844V846M863.5 829V846M864.5 841V846M865.5 844V846M866.5 846V849M867.5 846V850M868.5 846V851M869.5 846V853M870.5 846V856M871.5 840V846M872.5 839V846M873.5 828V846M874.5 838V846M875.5 846V848M876.5 846V861M877.5 841V846M878.5 839V846M879.5 846V870M880.5 846V874M881.5 846V848M882.5 846V862M883.5 846V876M884.5 846V870M885.5 835V846M886.5 841V846M887.5 846V856M888.5 846V863M889.5 846V859M890.5 826V846M891.5 846V856M892.5 837V846M893.5 836V846M894.5 832V846M895.5 833V846M896.5 846V848M897.5 845V846M898.5 846V855M899.5 846V890M900.5 846V877M901.5 846V866M902.5 846V857M903.5 838V846M904.5 840V846M905.5 792V846M906.5 834V846M907.5 846V848M908.5 846V877M909.5 846V877M910.5 846V865M911.5 846V910M912.5 846V866M913.5 846V885M914.5 846V867M915.5 846V862M916.5 825V846M917.5 820V846M918.5 846V861M919.5 825V846M920.5 831V846M921.5 846V896M922.5 826V846M923.5 836V846M924.5 784V846M925.5 825V846M926.5 846V880M927.5 818V846M928.5 846V871M929.5 846V873M930.5 844V846M931.5 846V864M932.5 830V846M933.5 827V846M934.5 846V861M935.5 846V896M936.5 821V846M937.5 787V846M938.5 846V867M939.5 846V875M940.5 846V883M941.5 846V872M942.5 846V873M943.5 846V864M944.5 846V860M945.5 846V852M946.5 846V852M947.5 846V852M948.5 846V851M949.5 833V846M950.5 836V846M951.5 846V861M952.5 834V846M953.5 836V846M954.5 830V846M955.5 838V846M956.5 839V846M957.5 839V846M958.5 846V852M959.5 846V859M960.5 846V859M961.5 846V858M962.5 842V846M963.5 845V846M964.5 846V849M965.5 846V850M967.5 845V846M968.5 845V846M969.5 845V846M970.5 845V846M971.5 845V846M973.5 845V846M974.5 845V846M975.5 845V846M976.5 845V846M982.5 845V846M983.5 845V846M984.5 845V846M985.5 845V846M986.5 845V846M988.5 845V846M989.5 845V846M990.5 845V846M996.5 846V847M997.5 845V846M998.5 846V847M999.5 845V846M1000.5 845V846M1001.5 845V846M1002.5 845V846M1003.5 845V846M1004.5 845V846M1005.5 845V846M1006.5 845V846M1008.5 845V846M1011.5 846V847M1012.5 845V846M1013.5 845V846M1014.5 845V846M1018.5 845V846M1019.5 845V846M1020.5 845V846M1021.5 846V847M1022.5 845V846M1023.5 845V846M1024.5 845V846M1025.5 845V846M1026.5 845V846M1028.5 846V847M1029.5 845V846M1031.5 845V846M1033.5 845V846M1034.5 846V847M1037.5 845V846M1041.5 845V846M1042.5 845V846M1043.5 845V846M1044.5 845V846M1045.5 846V847M1046.5 843V846M1047.5 842V846M1048.5 846V849M1049.5 836V846M1050.5 846V856M1051.5 846V857M1052.5 846V850M1053.5 819V846M1054.5 837V846M1055.5 845V846M1056.5 846V869M1057.5 838V846M1058.5 846V856M1059.5 817V846M1060.5 844V846M1061.5 846V852M1062.5 846V852M1063.5 836V846M1064.5 816V846M1065.5 846V856M1066.5 825V846M1067.5 826V846M1068.5 815V846M1069.5 821V846M1070.5 828V846M1071.5 846V877M1072.5 811V846M1073.5 846V849M1074.5 819V846M1075.5 846V898M1076.5 827V846M1077.5 846V867M1078.5 800V846M1079.5 846V852M1080.5 835V846M1081.5 846V852M1082.5 833V846M1083.5 846V848M1084.5 830V846M1085.5 846V851M1086.5 846V852M1087.5 846V852M1088.5 846V853M1089.5 846V856M1090.5 841V846M1091.5 846V848M1092.5 846V850M1093.5 846V851M1094.5 846V856M1095.5 846V854M1096.5 846V857M1097.5 846V854M1098.5 846V854M1099.5 846V856M1100.5 846V852M1101.5 846V851M1102.5 837V846M1103.5 844V846M1104.5 842V846M1105.5 843V846M1106.5 843V846M1107.5 842V846M1108.5 822V846M1109.5 809V846M1110.5 846V898M1111.5 837V846M1112.5 846V854M1113.5 842V846M1114.5 846V863M1115.5 836V846M1116.5 846V852M1117.5 825V846M1118.5 846V863M1119.5 791V846M1120.5 846V850M1121.5 846V866M1122.5 846V883M1123.5 846V864M1124.5 799V846M1125.5 846V864M1126.5 846V859M1127.5 846V852M1128.5 846V867M1129.5 825V846M1130.5 846V880M1131.5 834V846M1132.5 846V854M1133.5 846V863M1134.5 846V854M1135.5 846V857M1136.5 846V872M1137.5 846V854M1138.5 846V853M1139.5 827V846M1140.5 803V846M1141.5 846V855M1142.5 846V852M1143.5 846V853M1144.5 836V846M1145.5 846V850M1146.5 838V846M1147.5 836V846M1148.5 842V846M1149.5 843V846M1150.5 843V846M1151.5 844V846M1152.5 846V847M1153.5 845V846M1154.5 845V846M1155.5 845V846M1156.5 845V846M1157.5 845V846M1158.5 845V846M1161.5 845V846M1162.5 845V846M1163.5 845V846M1165.5 845V846M1166.5 845V846M1167.5 845V846M1168.5 845V846M1169.5 845V846M1171.5 845V846M1172.5 845V846M1174.5 845V846M1176.5 845V846M1178.5 845V846M1180.5 845V846M1181.5 845V846M1182.5 845V846M1187.5 845V846M1188.5 845V846M1189.5 845V846M1192.5 845V846M1194.5 846V847M1195.5 845V846M1196.5 845V846M1197.5 845V846M1198.5 845V846M1199.5 845V846M1200.5 845V846M1202.5 845V846M1203.5 845V846M1205.5 845V846" stroke="#dc32ff" stroke-width="1" fill="none"/><rect x="690" y="492" width="427" height="196" fill="rgb(185,205,228)" fill-opacity="0.345"/><path d="M688 490H1119V690H688Z M690 492V688H1117V492Z" fill="#ff0000" fill-rule="evenodd"/><rect x="758" y="745" width="3" height="200" fill="#0000ff"/></svg>
</body></html>
